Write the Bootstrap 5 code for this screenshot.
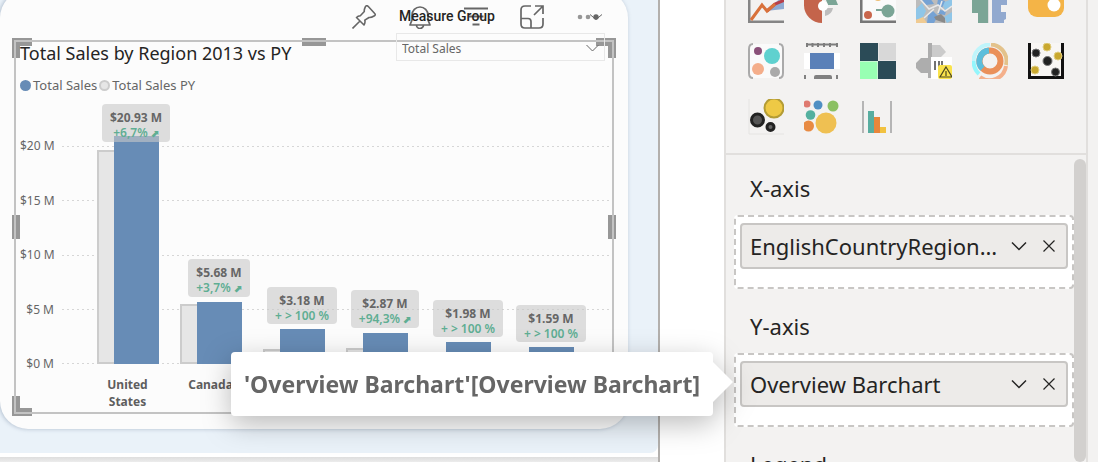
<!DOCTYPE html>
<html lang="en">
<head>
<meta charset="utf-8">
<meta name="viewport" content="width=device-width, initial-scale=1">
<title>Total Sales by Region</title>
<link rel="stylesheet" href="https://cdn.jsdelivr.net/npm/bootstrap@5.3.0/dist/css/bootstrap.min.css">
<style>
  body { font-family: "Noto Sans", "Open Sans", sans-serif; color: #252423; background: #fff; }
  button { font: inherit; color: inherit; }
  .bare { background: none; border: 0; padding: 0; line-height: 0; display: block; }

  /* report canvas */
  .workspace { padding-right: 64px; min-width: 0; }
  .sheet { border-right: 2px solid #b3b0ad; }
  .sheet-page { display: flow-root; background: #eaf2f9; border-bottom-right-radius: 8px; padding: 0 30px 24px 0; }
  .sheet-foot { margin-top: 4px; background: linear-gradient(#dedede, #ececec 5px); }
  .tile { background: #fcfcfc; border-radius: 28px; margin-top: -10px; padding: 10px 14px 15px; box-shadow: -1px 0 4px rgba(90, 110, 140, .4); }
  .tool-row { gap: 32px; padding: 0 14px 7px 0; height: 40px; color: #666; }
  .slicer { top: 17px; right: 23px; width: 209px; z-index: 2; }
  .slicer-name { font: 500 14px/18px Roboto, sans-serif; padding: 0 3px; color: #252423; margin-bottom: 8px; }
  .slicer select { appearance: none; width: 100%; height: 28px; border: 1px solid #e8e8e8; background: none; font-size: 12px; color: #666; padding: 4px 5px 0; display: block; }
  .slicer-arrow { right: 6px; bottom: 9px; pointer-events: none; }
  .slicer-toggle { right: 2px; top: 6px; }

  /* selected visual frame */
  .visual { isolation: isolate; padding: 2px; }
  .visual::after { content: ""; position: absolute; inset: 0; border: 2px solid #c3c3c3; pointer-events: none; }
  .grip { position: absolute; z-index: -1; border: 0 solid #979797; width: 20px; height: 20px; }
  .grip-t { top: -2px; } .grip-b { bottom: -2px; } .grip-l { left: -2px; } .grip-r { right: -2px; }
  .corner.grip-t { border-top-width: 8px; } .corner.grip-b { border-bottom-width: 8px; }
  .corner.grip-l { border-left-width: 8px; } .corner.grip-r { border-right-width: 8px; }
  .edge { background: #979797; }
  .edge-v { width: 8px; height: 24px; top: calc(50% - 12px); }
  .edge-h { width: 24px; height: 8px; left: calc(50% - 12px); }

  .chart-title { font-size: 18px; line-height: 22px; padding-left: 4px; margin: 0; font-weight: 400; }
  .key-row { font-size: 13px; line-height: 20px; color: #666; padding: 11px 4px 0; gap: 2px; }
  .dot { width: 11px; height: 11px; border-radius: 50%; background: #678cb6; }
  .dot-py { background: #e6e6e6; border: 2px solid #ccc; }
  .chart-area { margin-top: 51px; padding: 0 2px 0 4px; gap: 8px; }
  .y-scale { width: 34px; height: 236px; margin: -9px 0; font-size: 12px; line-height: 18px; color: #666; text-align: right; white-space: nowrap; }
  .plot { height: 218px; }
  .grid-rule { height: 1px; background: repeating-linear-gradient(90deg, #d6d6d6 0 2px, transparent 2px 5px); }
  .six { display: grid; grid-template-columns: repeat(6, minmax(0, 1fr)); padding: 0 26px 0 24px; }
  .bar-py { width: 45px; background: #e6e6e6; border: 2px solid #ccc; }
  .bar-now { width: 45px; height: 100%; margin-left: -28px; }
  .bar-fill { width: 45px; background: #678cb6; flex: none; }
  .tag { background: rgba(200, 200, 200, .6); border-radius: 4px; padding: 6px 8px 1px; margin-bottom: 5px; font-size: 12px; font-weight: 700; line-height: 15px; color: #666; white-space: nowrap; text-align: center; z-index: 1; flex: none; }
  .tag-clamped { margin-bottom: -6px; }
  .delta { color: #5fae93; font-weight: 600; }
  .trend { font-size: 10px; }
  .names { font-size: 12px; font-weight: 700; line-height: 17px; color: #5e5e5e; text-align: center; min-height: 48px; padding-top: 12px; margin-left: 46px; margin-right: 2px; }

  /* build pane */
  .build { flex: 0 0 374px; min-width: 0; background: #f3f2f1; border-left: 2px solid #e1dfdd; padding-right: 10px; }
  .build-inner { border-right: 2px solid #e1dfdd; }
  .gallery { display: grid; grid-template-columns: repeat(6, 36px); gap: 20px; padding: 0 22px 18px; margin-top: -13px; border-bottom: 2px solid #e1dfdd; flex: none; }
  .gallery svg { width: 36px; height: 36px; display: block; }
  .wells { padding: 0 12px 0 8px; flex: 1 0 0; min-height: 0; }
  .well-name { font-size: 22px; line-height: 32px; padding: 17px 16px 11px; margin: 0; font-weight: 400; }
  .well { background: #fff; border: 2px dashed #c8c6c4; border-radius: 4px; padding: 6px 4px 18px; margin-bottom: 4px; }
  .pill { background: #edebe9; border: 2px solid #c8c6c4; border-radius: 4px; height: 46px; padding: 0 8px; font-size: 22px; }
  .pill-acts { gap: 16px; padding: 0 3px 0 8px; }
  .thumb { width: 12px; top: 4px; right: 0; bottom: 0; background: #d2d0ce; border-radius: 6px; }
  .hint { top: 0; bottom: 0; right: calc(100% + 29px); z-index: 5; }
  .hint-box { position: relative; background: #fff; border-radius: 4px; padding: 14px 13px; font-size: 23px; font-weight: 700; line-height: 36px; color: #666; white-space: nowrap; filter: drop-shadow(0 8px 14px rgba(0, 0, 0, .26)); }
  .hint-box::after { content: ""; position: absolute; left: 100%; top: 10px; border: 20px solid transparent; border-left-color: #fff; border-right-width: 0; }
</style>
</head>
<body>
<div class="d-flex vh-100 overflow-hidden">
  <main class="workspace flex-grow-1">
    <div class="sheet h-100 d-flex flex-column">
      <div class="sheet-page">
        <section class="tile position-relative">
          <div class="tool-row d-flex justify-content-end align-items-center">
            <button class="bare" aria-label="Pin visual"><svg width="24" height="24" viewBox="0 0 24 24" fill="none" stroke="currentColor" stroke-width="1.600" stroke-linejoin="round"><path d="M0.500 23.500L7.500 16.500M4.500 12.500L12 20Q13.500 17.500 12.800 15.200L17 12.500Q19 12.800 22.500 10.800Q24 9.700 22.500 8.200L16.300 1.500Q14.500-.2 13.300 1.800Q12 4.500 12.300 6.500L8.300 10.800Q6 11 4.500 12.500Z"/></svg></button>
            <button class="bare" aria-label="Set alert"><svg width="24" height="24" viewBox="0 0 24 24" fill="none" stroke="currentColor" stroke-width="1.700" stroke-linejoin="round"><path d="M4 15V10a8 8 0 0 1 16 0v5l2 5H2zM8.500 20a3.500 3.500 0 0 0 7 0"/></svg></button>
            <button class="bare" aria-label="Filters"><svg width="24" height="24" viewBox="0 0 24 24" fill="none" stroke="currentColor" stroke-width="1.800"><path d="M0 3.500h24M4.500 11.500h15M8.500 19.500h7"/></svg></button>
            <button class="bare" aria-label="Focus mode"><svg width="24" height="24" viewBox="0 0 24 24" fill="none" stroke="currentColor" stroke-width="1.700"><path d="M11 1H5Q1 1 1 5v14q0 4 4 4h14q4 0 4-4v-6M1 13.500h7q3 0 3 3V23M14 10L23 1M15 1h8v8"/></svg></button>
            <button class="bare" aria-label="More options"><svg width="24" height="24" viewBox="0 0 24 24" fill="#979797"><circle cx="4" cy="12" r="2.300"/><circle cx="12" cy="12" r="2.300"/><circle cx="20" cy="12" r="2.700" fill="#666"/></svg></button>
          </div>

          <div class="slicer position-absolute">
            <label class="slicer-name d-block" for="measure">Measure Group</label>
            <button class="bare slicer-toggle position-absolute" aria-label="Collapse"><svg width="14" height="8" viewBox="0 0 14 8" fill="none" stroke="#666"><path d="M1 1.500l6 5 6-5"/></svg></button>
            <select id="measure"><option>Total Sales</option></select>
            <svg class="slicer-arrow position-absolute" width="13" height="8" viewBox="0 0 13 8" fill="none" stroke="#666"><path d="M.5 1l6 6 6-6"/></svg>
          </div>

          <div class="visual position-relative">
            <i class="grip corner grip-t grip-l"></i><i class="grip corner grip-t grip-r"></i>
            <i class="grip corner grip-b grip-l"></i><i class="grip corner grip-b grip-r"></i>
            <i class="grip edge edge-v grip-l"></i><i class="grip edge edge-v grip-r"></i>
            <i class="grip edge edge-h grip-t"></i><i class="grip edge edge-h grip-b"></i>

            <h1 class="chart-title">Total Sales by Region 2013 vs PY</h1>
            <div class="key-row d-flex align-items-center">
              <span class="dot"></span><span>Total Sales</span>
              <span class="dot dot-py"></span><span>Total Sales PY</span>
            </div>

            <div class="chart-area d-flex">
              <div class="y-scale d-flex flex-column justify-content-between">
                <span>$20 M</span><span>$15 M</span><span>$10 M</span><span>$5 M</span><span>$0 M</span>
              </div>
              <div class="plot flex-grow-1 position-relative">
                <div class="position-absolute top-0 start-0 w-100 h-100 d-flex flex-column justify-content-between">
                  <div class="grid-rule"></div><div class="grid-rule"></div><div class="grid-rule"></div><div class="grid-rule"></div><div class="grid-rule"></div>
                </div>
                <!-- bar heights are a percentage of the 20 M scale -->
                <div class="six h-100 position-relative">
                  <div class="d-flex h-100 align-items-end justify-content-center"><div class="bar-py" style="height:98.2%"></div><div class="bar-now d-flex flex-column justify-content-end align-items-center"><div class="tag tag-clamped"><div>$20.93 M</div><div class="delta">+6,7% <span class="trend">⬈</span></div></div><div class="bar-fill" style="height:104.65%"></div></div></div>
                  <div class="d-flex h-100 align-items-end justify-content-center"><div class="bar-py" style="height:27.4%"></div><div class="bar-now d-flex flex-column justify-content-end align-items-center"><div class="tag"><div>$5.68 M</div><div class="delta">+3,7% <span class="trend">⬈</span></div></div><div class="bar-fill" style="height:28.4%"></div></div></div>
                  <div class="d-flex h-100 align-items-end justify-content-center"><div class="bar-py" style="height:7%"></div><div class="bar-now d-flex flex-column justify-content-end align-items-center"><div class="tag"><div>$3.18 M</div><div class="delta">+ &gt; 100 %</div></div><div class="bar-fill" style="height:15.9%"></div></div></div>
                  <div class="d-flex h-100 align-items-end justify-content-center"><div class="bar-py" style="height:7.4%"></div><div class="bar-now d-flex flex-column justify-content-end align-items-center"><div class="tag"><div>$2.87 M</div><div class="delta">+94,3% <span class="trend">⬈</span></div></div><div class="bar-fill" style="height:14.35%"></div></div></div>
                  <div class="d-flex h-100 align-items-end justify-content-center"><div class="bar-py" style="height:4%"></div><div class="bar-now d-flex flex-column justify-content-end align-items-center"><div class="tag"><div>$1.98 M</div><div class="delta">+ &gt; 100 %</div></div><div class="bar-fill" style="height:9.9%"></div></div></div>
                  <div class="d-flex h-100 align-items-end justify-content-center"><div class="bar-py" style="height:3%"></div><div class="bar-now d-flex flex-column justify-content-end align-items-center"><div class="tag"><div>$1.59 M</div><div class="delta">+ &gt; 100 %</div></div><div class="bar-fill" style="height:7.95%"></div></div></div>
                </div>
              </div>
            </div>
            <div class="six names"><div>United<br>States</div><div>Canada</div></div>
          </div>
        </section>
      </div>
      <div class="sheet-foot flex-grow-1"></div>
    </div>
  </main>

  <aside class="build">
    <div class="build-inner h-100 d-flex flex-column">
      <div class="gallery">
        <button class="bare" aria-label="Line forecast"><svg viewBox="0 0 36 36"><path d="M18 24L36 8v14z" fill="#8faad2"/><path d="M1 0v35h35" fill="none" stroke="#858585" stroke-width="3"/><path d="M19 24l8-7 10-4" fill="none" stroke="#b8404a" stroke-width="3"/><path d="M3 33l11-15 5 6 8-7" fill="none" stroke="#d9713a" stroke-width="3"/></svg></button>
        <button class="bare" aria-label="Rose chart"><svg viewBox="0 0 36 36"><path d="M18 36A18 18 0 0 1 0 18h18z" fill="#c4644b"/><path d="M0 8h18v11H0z" fill="#c4644b"/><path d="M20 8h10l4 10H24z" fill="#7ba596"/><path d="M21 29v-8h8a10 10 0 0 1-8 8" fill="#bdbdbd"/><circle cx="19" cy="19" r="5" fill="#fff"/></svg></button>
        <button class="bare" aria-label="Bubble timeline"><svg viewBox="0 0 36 36"><path d="M1 0v35h35" fill="none" stroke="#777" stroke-width="3"/><path d="M3 0h33v33H3z" fill="#fafafa"/><circle cx="18" cy="9" r="5" fill="#edbd73"/><circle cx="8" cy="28" r="4" fill="#c9664c"/><path d="M16 22h8v2h-8z" fill="#7ba596"/><circle cx="28" cy="24" r="6.500" fill="#7ba596"/></svg></button>
        <button class="bare" aria-label="Mosaic map"><svg viewBox="0 0 36 36"><path fill="#bcbcbc" d="M0 0h36v36H0z"/><path fill="#8fc6e8" d="M0 22l6-6 4 8-4 8H0zM26 16l10-4v7l-7 4zM28 30l8-5v8l-5 3z"/><path fill="#75a2d4" d="M6 13l8-2 4 6-8 1zM22 12l7 2-3 7-5-3zM12 28l5-4 5 5-4 7h-7zM24 23l6 1-1 4-7-1z"/><path fill="#f0cb92" d="M0 33l7-3 4 6H0z"/><path fill="#898989" d="M18 30l7-3 4 4v5l-9-3z"/><path d="M4 12l9 10 9-4 7 6 7-5M8 31l10-9M22 26l4-12" fill="none" stroke="#e9e9e9" stroke-width="1.500"/></svg></button>
        <button class="bare" aria-label="Paired bars"><svg viewBox="0 0 36 36"><path d="M6 0h10v36H6V26H0V17h6zM0 12h6v6H0z" fill="#7ba596"/><path d="M20 0h10v18h-1v7h5v7l-2 1v3H20zM29 12h6v6h-6z" fill="#91a9cf"/><path d="M16.500 12v24" stroke="#ddd"/></svg></button>
        <button class="bare" aria-label="Toggle card"><svg viewBox="0 0 36 36"><rect y="5" width="36" height="25" rx="9" fill="#f4b447"/><circle cx="26" cy="18" r="6.500" fill="#fff"/></svg></button>

        <button class="bare" aria-label="Packed bubbles"><svg viewBox="0 0 36 36"><rect x="1" y="1" width="34" height="34" rx="5" fill="#fafafa"/><path d="M5 1Q1 1 1 6v24q0 5 4 5M31 1q4 0 4 5v24q0 5-4 5" fill="none" stroke="#aaa" stroke-width="2"/><circle cx="10" cy="8" r="4" fill="#8a5079"/><circle cx="24" cy="13" r="8" fill="#5fd1cf"/><circle cx="10" cy="26" r="6" fill="#f4ae8b"/><circle cx="27" cy="29" r="5" fill="#aaa"/></svg></button>
        <button class="bare" aria-label="Film card"><svg viewBox="0 0 36 36"><path fill="#fff" d="M0 10h36v16H0z"/><path d="M2 1.500h32M3 0v4M8.500 0v4M14 0v4M20 0v4M26 0v4M33 0v4" stroke="#7d7d7d" stroke-width="2"/><path fill="#5a80b8" d="M6 10h24v16H6z"/><path d="M10 36v-2q0-2 2-2h14q2 0 2 2v2zM0 32h2v4H0zM32 32h2v4h-2z" fill="#808080"/></svg></button>
        <button class="bare" aria-label="Quadrants"><svg viewBox="0 0 36 36"><path fill="#2b4b57" d="M0 0h18v18H0zM18 18h18v18H18z"/><path fill="#d8d8d8" d="M18.500 0H36v17.500H18.500z"/><path fill="#98ffb3" d="M0 18.500h17.500V36H0z"/></svg></button>
        <button class="bare" aria-label="Signpost"><svg viewBox="0 0 36 36"><path fill="#cbcbcb" d="M16 2h8l6 7-6 6h-8z"/><path fill="#adadad" d="M12 0h4v35h-4zM5 15h7v15H5l-5-5v-5z"/><path fill="#fff" d="M15 14h21v22H15z"/><path d="M19 18v9M23 18v9M26 18v9" stroke="#444" stroke-width="1.500"/><rect x="22" y="22" width="14" height="14" rx="2" fill="#fae34c"/><path d="M30 24l6 10H24zM30 28v5" fill="none" stroke="#4d4820" stroke-width="1.200"/></svg></button>
        <button class="bare" aria-label="Nested rings"><svg viewBox="0 0 36 36" fill="none"><path d="M1.500 18A16.500 16.500 0 0 1 18 1.500" stroke="#bff5fb" stroke-width="4"/><path d="M7 31Q1.500 26 1.500 18" stroke="#94f6fc" stroke-width="4"/><path d="M19 1.500A16.500 16.500 0 0 1 34 22" stroke="#e3c28b" stroke-width="4"/><path d="M34 23A16.500 16.500 0 0 1 8 34" stroke="#f4b08b" stroke-width="4"/><circle cx="18" cy="18" r="10.500" stroke="#ea9059" stroke-width="6"/><path d="M10.500 25.500A10.500 10.500 0 0 1 17 7.500" stroke="#5cbedb" stroke-width="6"/></svg></button>
        <button class="bare" aria-label="Scatter frame"><svg viewBox="0 0 36 36"><path fill="#f8f6f4" stroke="#111" stroke-width="3" d="M1.500-2h33v36.500h-33z"/><g fill="#c9a82f" stroke="#e2cf83"><circle cx="19" cy="4" r="4"/><circle cx="30" cy="13" r="4"/><circle cx="7" cy="27" r="4"/></g><g fill="#222" stroke="#777"><circle cx="8" cy="10" r="4"/><circle cx="19.500" cy="18" r="4.500"/><circle cx="27.500" cy="29" r="4"/></g></svg></button>

        <button class="bare" aria-label="Bubble set"><svg viewBox="0 0 36 36"><path d="M1 0v35h35" fill="none" stroke="#e5e4e2"/><circle cx="26" cy="9" r="9.500" fill="#eec945" stroke="#b39c35" stroke-width="2"/><circle cx="9.500" cy="21" r="6" fill="#555" stroke="#222" stroke-width="3"/><circle cx="22.500" cy="28" r="3.500" fill="#666" stroke="#222" stroke-width="3"/></svg></button>
        <button class="bare" aria-label="Colour bubbles"><svg viewBox="0 0 36 36"><circle cx="3" cy="5" r="3.500" fill="#df7a70"/><circle cx="14" cy="6" r="4.500" fill="#4f8fc3"/><circle cx="29" cy="7" r="5.500" fill="#8bc063"/><circle cx="6.500" cy="16" r="4.800" fill="#54b09f"/><circle cx="22" cy="24" r="10.500" fill="#efc052"/><circle cx="4.500" cy="27" r="5.500" fill="#e88b43"/></svg></button>
        <button class="bare" aria-label="Pareto"><svg viewBox="0 0 36 36"><path fill="#b5b5b5" d="M2 2h2v32H2zM30 2h2v32h-2z"/><path fill="#58ada0" d="M8 12h6v22H8z"/><path fill="#e8863b" d="M14 18h6v16h-6z"/><path fill="#f2c240" d="M20 28h6v6h-6z"/></svg></button>
      </div>

      <div class="wells position-relative">
        <div class="thumb position-absolute"></div>
        <h2 class="well-name">X-axis</h2>
        <div class="well">
          <div class="pill d-flex align-items-center">
            <span class="text-truncate flex-grow-1">EnglishCountryRegionName</span>
            <div class="pill-acts d-flex align-items-center">
              <button class="bare" aria-label="Field options"><svg width="16" height="16" viewBox="0 0 16 16" fill="none" stroke="#252423" stroke-width="1.500"><path d="M1 4.500l7 7 7-7"/></svg></button>
              <button class="bare" aria-label="Remove field"><svg width="12" height="12" viewBox="0 0 12 12" fill="none" stroke="#252423" stroke-width="1.200"><path d="M.5.5l11 11M11.500.5l-11 11"/></svg></button>
            </div>
          </div>
        </div>
        <h2 class="well-name">Y-axis</h2>
        <div class="well">
          <div class="pill d-flex align-items-center position-relative">
            <span class="text-truncate flex-grow-1">Overview Barchart</span>
            <div class="pill-acts d-flex align-items-center">
              <button class="bare" aria-label="Field options"><svg width="16" height="16" viewBox="0 0 16 16" fill="none" stroke="#252423" stroke-width="1.500"><path d="M1 4.500l7 7 7-7"/></svg></button>
              <button class="bare" aria-label="Remove field"><svg width="12" height="12" viewBox="0 0 12 12" fill="none" stroke="#252423" stroke-width="1.200"><path d="M.5.5l11 11M11.500.5l-11 11"/></svg></button>
            </div>
            <div class="hint position-absolute d-flex align-items-center"><div class="hint-box" role="tooltip">'Overview Barchart'[Overview Barchart]</div></div>
          </div>
        </div>
        <h2 class="well-name">Legend</h2>
      </div>
    </div>
  </aside>
</div>
<script src="https://cdn.jsdelivr.net/npm/bootstrap@5.3.0/dist/js/bootstrap.bundle.min.js"></script>
</body>
</html>
